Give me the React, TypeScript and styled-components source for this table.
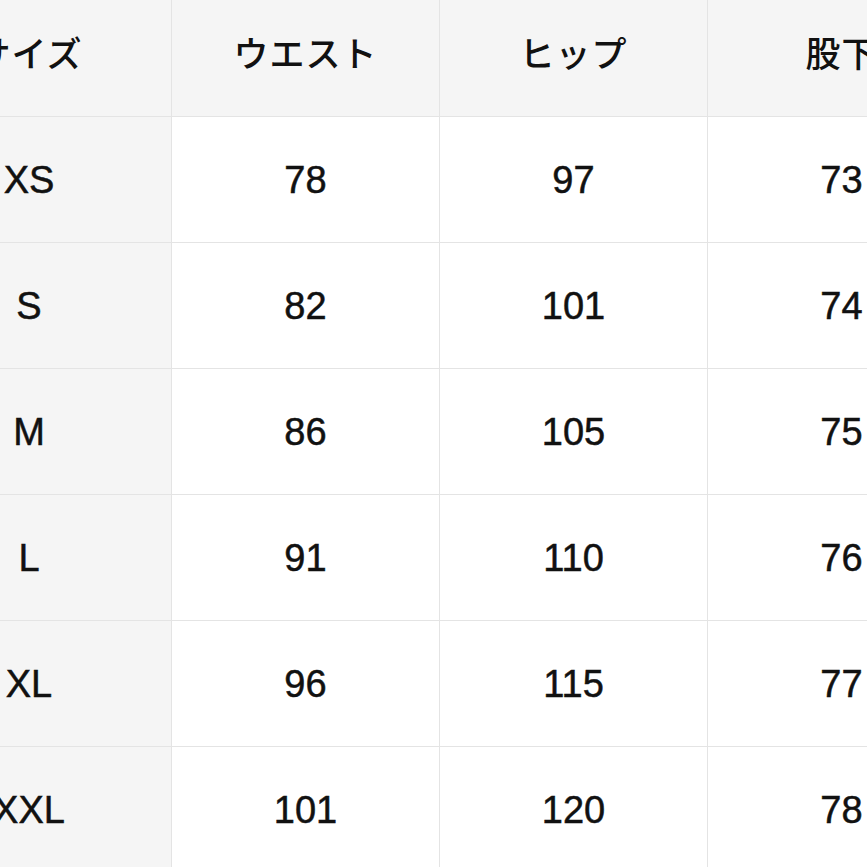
import React from "react";
import styled, { createGlobalStyle } from "styled-components";

const Global = createGlobalStyle`
  html, body { margin: 0; padding: 0; background: #ffffff; overflow: hidden; }
  body { width: 867px; height: 867px; }
`;

const Table = styled.div`
  display: grid;
  grid-template-columns: 285px 268px 268px 268px;
  grid-template-rows: 130px repeat(6, 126px);
  margin-left: -113px;
  margin-top: -13px;
  width: max-content;
`;

const Cell = styled.div<{ $shade?: boolean; $head?: boolean }>`
  display: flex;
  align-items: center;
  justify-content: center;
  box-sizing: border-box;
  background: ${(p) => (p.$shade ? "#f5f5f5" : "#ffffff")};
  border-right: 1px solid #e4e4e4;
  border-bottom: 1px solid #e4e4e4;
  color: #111111;
  font-family: ${(p) =>
    p.$head
      ? '"Noto Sans CJK JP", "Liberation Sans", sans-serif'
      : '"Liberation Sans", "Noto Sans CJK JP", sans-serif'};
  font-size: ${(p) => (p.$head ? "35px" : "38px")};
  font-weight: ${(p) => (p.$head ? 500 : 400)};
  letter-spacing: ${(p) => (p.$head ? "1px" : "0")};
  -webkit-text-stroke: ${(p) => (p.$head ? "0" : "0.5px #111111")};
  padding-top: ${(p) => (p.$head ? "0" : "1px")};
`;

const headers = ["サイズ", "ウエスト", "ヒップ", "股下"];
const rows = [
  ["XS", "78", "97", "73"],
  ["S", "82", "101", "74"],
  ["M", "86", "105", "75"],
  ["L", "91", "110", "76"],
  ["XL", "96", "115", "77"],
  ["XXL", "101", "120", "78"],
];

export default function App() {
  return (
    <>
      <Global />
      <Table>
        {headers.map((h) => (
          <Cell key={h} $shade $head>
            {h}
          </Cell>
        ))}
        {rows.map((r) =>
          r.map((v, i) => (
            <Cell key={r[0] + i} $shade={i === 0}>
              {v}
            </Cell>
          ))
        )}
      </Table>
    </>
  );
}
